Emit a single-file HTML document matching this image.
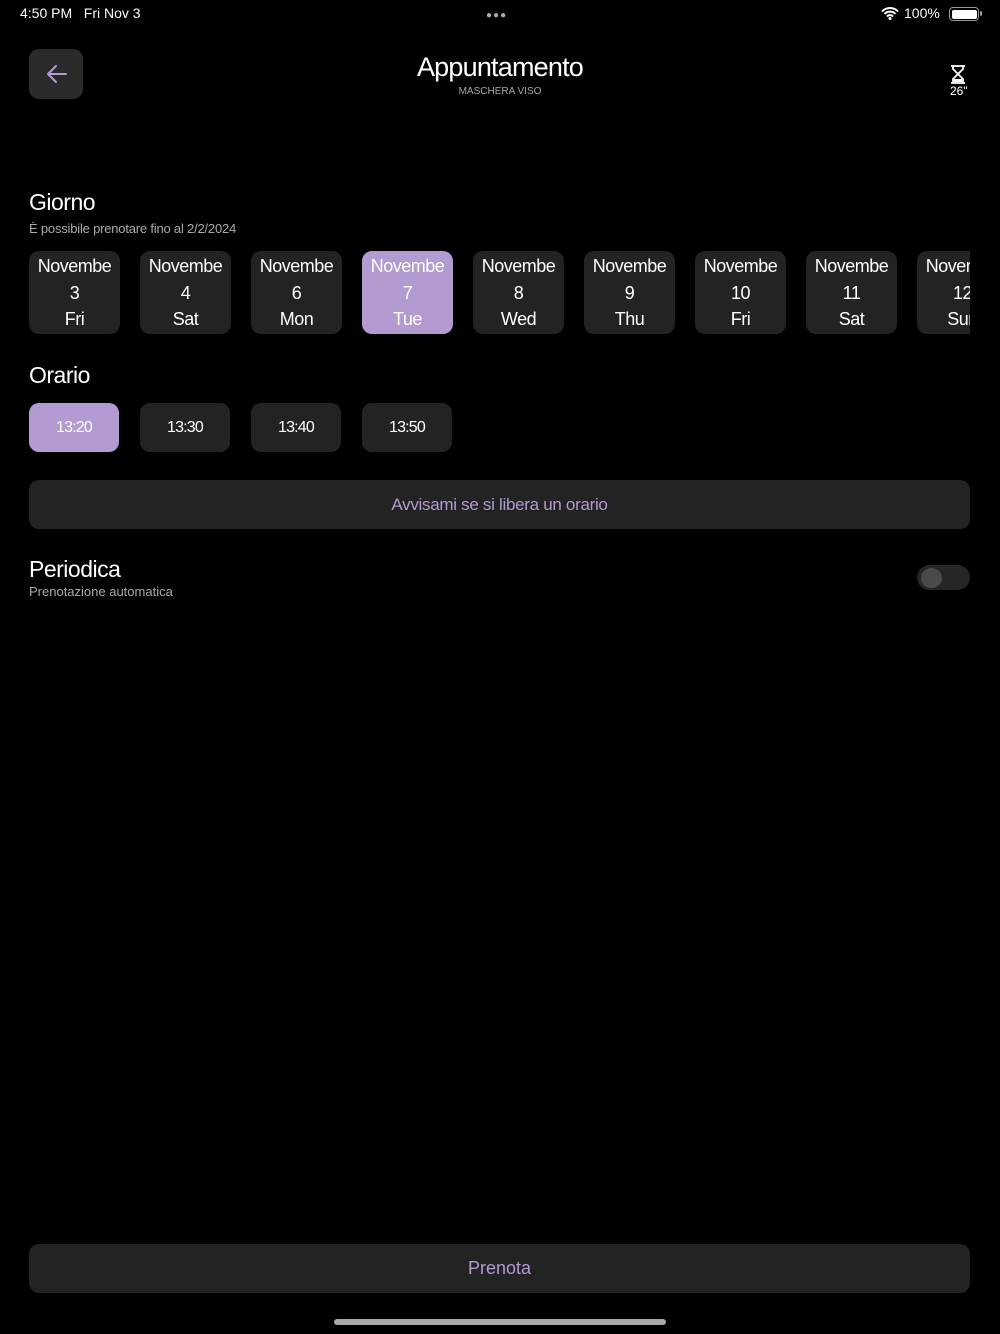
<!DOCTYPE html>
<html><head><meta charset="utf-8">
<style>
*{margin:0;padding:0;box-sizing:border-box}
body{width:1000px;height:1334px;background:#000;color:#fff;font-family:"Liberation Sans","DejaVu Sans",sans-serif;position:relative;overflow:hidden}
.abs{position:absolute}
.card{position:absolute;top:251px;width:91px;height:83px;border-radius:10px;background:#232323;text-align:center;font-size:18px;line-height:26.5px;padding-top:2px;overflow:hidden;white-space:nowrap;letter-spacing:-0.5px}
.sel{background:#b39ad0}
.time{position:absolute;top:403px;width:90px;height:49px;border-radius:10px;background:#232323;text-align:center;line-height:49px;font-size:16px;letter-spacing:-0.8px}
.time.sel{background:#b39ad0}
.h{font-size:23px;letter-spacing:-0.5px}
</style></head><body>
<div class="abs" style="left:20px;top:5px;font-size:14px">4:50 PM&nbsp;&nbsp;&nbsp;Fri Nov 3</div>
<div class="abs" style="left:486px;top:10px;font-size:10px;letter-spacing:1px;color:#aaa">●●●</div>
<svg class="abs" style="left:881px;top:7px" width="18" height="13" viewBox="0 0 18 13"><path d="M1 4.5A11 11 0 0 1 17 4.5M3.5 7A7.5 7.5 0 0 1 14.5 7M6 9.5A4 4 0 0 1 12 9.5" stroke="#fff" stroke-width="2" fill="none"/><circle cx="9" cy="11.5" r="1.5" fill="#fff"/></svg>
<div class="abs" style="left:904px;top:5px;font-size:14px">100%</div>
<div class="abs" style="left:949px;top:7px;width:30px;height:14px;border:1.5px solid #999;border-radius:4px;padding:1.5px"><div style="background:#fff;width:100%;height:100%;border-radius:2px"></div></div>
<div class="abs" style="left:980px;top:11px;width:2px;height:5px;background:#999;border-radius:1px"></div>

<div class="abs" style="left:29px;top:49px;width:54px;height:50px;border-radius:10px;background:#2a2a2a"></div>
<svg class="abs" style="left:46px;top:64px" width="22" height="20" viewBox="0 0 22 20"><path d="M20 10H3M10 2L2 10L10 18" stroke="#b39ad0" stroke-width="2" fill="none" stroke-linecap="round" stroke-linejoin="round"/></svg>
<div class="abs" style="left:0;width:1000px;top:52px;text-align:center;font-size:27px;letter-spacing:-0.8px">Appuntamento</div>
<div class="abs" style="left:0;width:1000px;top:86px;text-align:center;font-size:10px;color:#aaa">MASCHERA VISO</div>
<svg class="abs" style="left:949px;top:64px" width="18" height="21" viewBox="0 0 18 21"><path d="M2 2H16M2 19H16M4 2V5L9 10L4 15V19M14 2V5L9 10L14 15V19" stroke="#fff" stroke-width="1.8" fill="none"/><rect x="5" y="15" width="8" height="3" fill="#fff"/></svg>
<div class="abs" style="left:950px;top:84px;font-size:12px">26"</div>

<div class="abs h" style="left:29px;top:189px">Giorno</div>
<div class="abs" style="left:29px;top:221px;font-size:13px;color:#aaa;letter-spacing:-0.2px">È possibile prenotare fino al 2/2/2024</div>
<div class="abs" style="left:0;top:0;width:970px;height:400px;overflow:hidden">
<div class="card" style="left:29px">Novembe<br>3<br>Fri</div>
<div class="card" style="left:140px">Novembe<br>4<br>Sat</div>
<div class="card" style="left:251px">Novembe<br>6<br>Mon</div>
<div class="card sel" style="left:362px">Novembe<br>7<br>Tue</div>
<div class="card" style="left:473px">Novembe<br>8<br>Wed</div>
<div class="card" style="left:584px">Novembe<br>9<br>Thu</div>
<div class="card" style="left:695px">Novembe<br>10<br>Fri</div>
<div class="card" style="left:806px">Novembe<br>11<br>Sat</div>
<div class="card" style="left:917px">Novembe<br>12<br>Sun</div>
</div>

<div class="abs h" style="left:29px;top:362px">Orario</div>
<div class="time sel" style="left:29px">13:20</div>
<div class="time" style="left:140px">13:30</div>
<div class="time" style="left:251px">13:40</div>
<div class="time" style="left:362px">13:50</div>

<div class="abs" style="left:29px;top:480px;width:941px;height:49px;border-radius:10px;background:#232323;text-align:center;line-height:49px;font-size:17px;color:#b39ad0;letter-spacing:-0.3px">Avvisami se si libera un orario</div>

<div class="abs h" style="left:29px;top:556px">Periodica</div>
<div class="abs" style="left:29px;top:584px;font-size:13px;color:#aaa">Prenotazione automatica</div>
<div class="abs" style="left:917px;top:565px;width:53px;height:25px;border-radius:13px;background:#262626"></div>
<div class="abs" style="left:921px;top:568px;width:21px;height:20px;border-radius:50%;background:#4a4a4a"></div>

<div class="abs" style="left:29px;top:1244px;width:941px;height:49px;border-radius:10px;background:#232323;text-align:center;line-height:49px;font-size:18px;color:#b39ad0">Prenota</div>
<div class="abs" style="left:334px;top:1319px;width:332px;height:6px;border-radius:3px;background:#aaa"></div>
</body></html>
